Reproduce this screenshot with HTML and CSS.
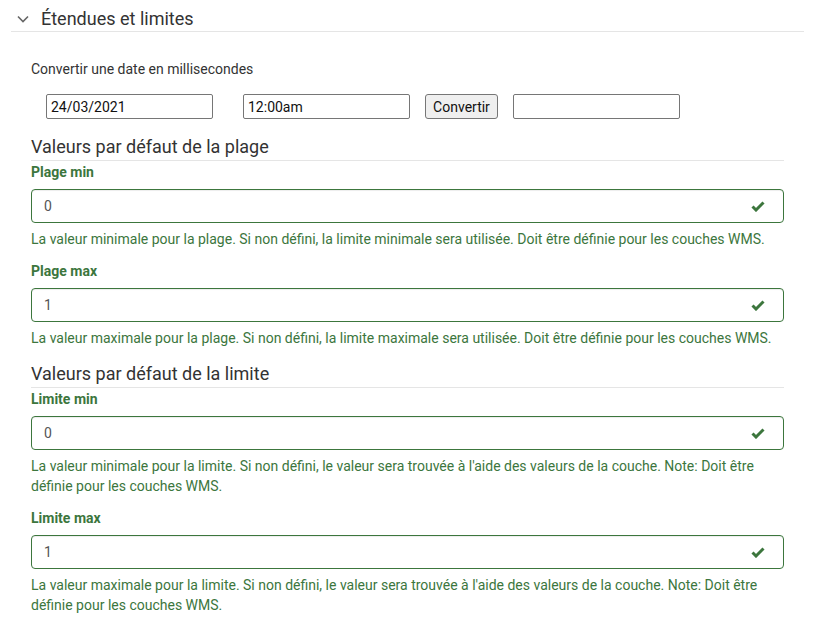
FILE: index.html
```html
<!DOCTYPE html>
<html lang="fr">
<head>
<meta charset="utf-8">
<link rel="stylesheet" href="styles.css">
</head>
<body>
<div class="panel">
  <div class="panel-head">
    <svg class="chev" width="12" height="8" viewBox="0 0 12 8"><path d="M1 1.5 L6 6.5 L11 1.5" fill="none" stroke="#666" stroke-width="1.6"/></svg>
    <span class="panel-title">Étendues et limites</span>
  </div>
  <div class="content">
    <p class="convert-title">Convertir une date en millisecondes</p>
    <div class="convert-row">
      <input class="plain date" type="text" value="24/03/2021">
      <input class="plain time" type="text" value="12:00am">
      <button class="btn">Convertir</button>
      <input class="plain result" type="text" value="">
    </div>

    <h3 class="section">Valeurs par défaut de la plage</h3>
    <div class="group">
      <label class="lbl">Plage min</label>
      <div class="field"><span class="val">0</span><svg class="ok" width="14" height="11" viewBox="0 0 14 11"><path d="M1.5 5.5 L5 9 L12.5 1.5" fill="none" stroke="#3c763d" stroke-width="3"/></svg></div>
      <p class="help">La valeur minimale pour la plage. Si non défini, la limite minimale sera utilisée. Doit être définie pour les couches WMS.</p>
    </div>
    <div class="group">
      <label class="lbl">Plage max</label>
      <div class="field"><span class="val">1</span><svg class="ok" width="14" height="11" viewBox="0 0 14 11"><path d="M1.5 5.5 L5 9 L12.5 1.5" fill="none" stroke="#3c763d" stroke-width="3"/></svg></div>
      <p class="help">La valeur maximale pour la plage. Si non défini, la limite maximale sera utilisée. Doit être définie pour les couches WMS.</p>
    </div>

    <h3 class="section">Valeurs par défaut de la limite</h3>
    <div class="group">
      <label class="lbl">Limite min</label>
      <div class="field"><span class="val">0</span><svg class="ok" width="14" height="11" viewBox="0 0 14 11"><path d="M1.5 5.5 L5 9 L12.5 1.5" fill="none" stroke="#3c763d" stroke-width="3"/></svg></div>
      <p class="help help-long">La valeur minimale pour la limite. Si non défini, le valeur sera trouvée à l'aide des valeurs de la couche. Note: Doit être définie pour les couches WMS.</p>
    </div>
    <div class="group">
      <label class="lbl">Limite max</label>
      <div class="field"><span class="val">1</span><svg class="ok" width="14" height="11" viewBox="0 0 14 11"><path d="M1.5 5.5 L5 9 L12.5 1.5" fill="none" stroke="#3c763d" stroke-width="3"/></svg></div>
      <p class="help help-long">La valeur maximale pour la limite. Si non défini, le valeur sera trouvée à l'aide des valeurs de la couche. Note: Doit être définie pour les couches WMS.</p>
    </div>
  </div>
</div>
</body>
</html>
```
FILE: styles.css
```css
* { box-sizing: border-box; }
body {
  margin: 0;
  background: #fff;
  font-family: Roboto, "Liberation Sans", sans-serif;
  color: #333;
  font-size: 14px;
}
.panel { padding: 0 12px 0 11px; }
.panel-head {
  display: flex;
  align-items: center;
  height: 32px;
  padding: 5px 0 0 6px;
  border-bottom: 1px solid #e5e5e5;
}
.chev { margin-right: 12px; margin-top: 1px; }
.panel-title { font-size: 18px; color: #333; }
.content { padding: 0 20px 0 20px; }
.convert-title { margin: 28px 0 0; line-height: 18px; font-size: 14px; }
.convert-row {
  display: flex;
  align-items: center;
  margin: 16px 0 16px 15px;
  height: 25px;
}
.plain {
  height: 25px;
  width: 167px;
  border: 1px solid #767676;
  border-radius: 2px;
  padding: 1px 4px;
  font-family: Roboto, "Liberation Sans", sans-serif;
  font-size: 14px;
  color: #111;
}
.time { margin-left: 30px; }
.btn {
  margin-left: 15px;
  height: 25px;
  width: 73px;
  background: #efefef;
  border: 1px solid #767676;
  border-radius: 3px;
  font-family: Roboto, "Liberation Sans", sans-serif;
  font-size: 14px;
  color: #111;
  padding: 0;
}
.result { margin-left: 15px; }
.section {
  font-weight: normal;
  font-size: 18px;
  margin: 14px 0 0;
  line-height: 24px;
  padding-bottom: 1px;
  border-bottom: 1px solid #e5e5e5;
  color: #333;
}
.group { margin: 0; }
.lbl {
  display: block;
  font-weight: bold;
  color: #3c763d;
  line-height: 20px;
  margin-top: 1px;
  margin-bottom: 7px;
}
.group + .group .lbl { margin-top: 12px; }
.field {
  height: 34px;
  border: 1px solid #3c763d;
  border-radius: 4px;
  display: flex;
  align-items: center;
  justify-content: space-between;
  padding: 0 18px 0 12px;
  box-shadow: inset 0 1px 1px rgba(0,0,0,.075);
}
.val { color: #555; font-size: 14px; }
.ok { display: block; }
.help {
  margin: 6px 0 0;
  line-height: 20px;
  color: #3c763d;
}
.help-long { margin-bottom: 4px; }
```
